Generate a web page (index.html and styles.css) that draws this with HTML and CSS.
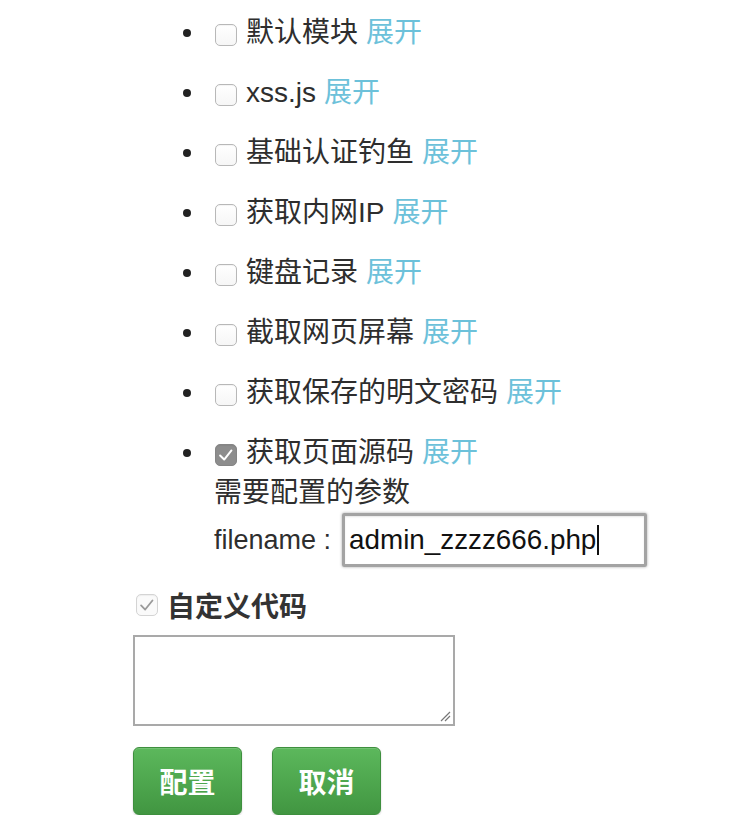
FILE: index.html
```html
<!DOCTYPE html>
<html lang="zh">
<head>
<meta charset="utf-8">
<link rel="stylesheet" href="styles.css">
</head>
<body>
<div class="page">
  <ul class="modules">
    <li class="mod"><span class="dot"></span><div class="body"><div class="line"><span class="cb"></span><span>默认模块</span><a class="expand">展开</a></div></div></li>
    <li class="mod"><span class="dot"></span><div class="body"><div class="line"><span class="cb"></span><span>xss.js</span><a class="expand">展开</a></div></div></li>
    <li class="mod"><span class="dot"></span><div class="body"><div class="line"><span class="cb"></span><span>基础认证钓鱼</span><a class="expand">展开</a></div></div></li>
    <li class="mod"><span class="dot"></span><div class="body"><div class="line"><span class="cb"></span><span>获取内网IP</span><a class="expand">展开</a></div></div></li>
    <li class="mod"><span class="dot"></span><div class="body"><div class="line"><span class="cb"></span><span>键盘记录</span><a class="expand">展开</a></div></div></li>
    <li class="mod"><span class="dot"></span><div class="body"><div class="line"><span class="cb"></span><span>截取网页屏幕</span><a class="expand">展开</a></div></div></li>
    <li class="mod"><span class="dot"></span><div class="body"><div class="line"><span class="cb"></span><span>获取保存的明文密码</span><a class="expand">展开</a></div></div></li>
    <li class="mod"><span class="dot"></span><div class="body">
      <div class="line"><span class="cb cb-on"><svg viewBox="0 0 22 22" width="20" height="20"><path d="M4.5 11.5 L9 16 L17 6" fill="none" stroke="#fff" stroke-width="2.2" stroke-linecap="round" stroke-linejoin="round"/></svg></span><span>获取页面源码</span><a class="expand">展开</a></div>
      <div class="line">需要配置的参数</div>
      <div class="param"><span class="param-label">filename :</span><div class="field">admin_zzzz666.php<span class="caret"></span></div></div>
    </div></li>
  </ul>
  <div class="custom"><span class="cb cb-light"><svg viewBox="0 0 22 22" width="20" height="20"><path d="M4.5 11.5 L9 16 L17 6" fill="none" stroke="#9a9a9a" stroke-width="2" stroke-linecap="round" stroke-linejoin="round"/></svg></span><span class="custom-title">自定义代码</span></div>
  <div class="code"><svg class="grip" viewBox="0 0 12 12" width="12" height="12"><path d="M2 11 L11 2 M6 11 L11 6" stroke="#777" stroke-width="1.2"/></svg></div>
  <div class="actions"><button class="btn">配置</button><button class="btn">取消</button></div>
</div>
</body>
</html>
```

FILE: styles.css
```css
* { box-sizing: border-box; }
html, body { margin: 0; background: #fff; }
body {
  font-family: "Liberation Sans", "Noto Sans CJK SC", sans-serif;
  font-size: 28px;
  color: #2e2e2e;
}
.page { padding: 13px 0 0 133px; }
.modules { list-style: none; margin: 0; padding: 0; }
.mod {
  display: grid;
  grid-template-columns: 81px 1fr;
  margin-bottom: 20px;
}
.mod:last-child { margin-bottom: 0; }
.dot {
  width: 8px; height: 8px; border-radius: 50%;
  background: #222;
  justify-self: end;
  margin: 16px 23px 0 0;
}
.line { height: 40px; line-height: 40px; display: flex; align-items: center; white-space: pre; }
.cb {
  width: 22px; height: 22px;
  border: 1px solid #b8b8b8;
  border-radius: 5px;
  background: linear-gradient(#ffffff, #f6f6f6);
  box-shadow: inset 0 1px 1px rgba(0,0,0,0.05);
  margin: 3px 9px 0 1px;
  display: inline-flex;
  flex: none;
}
.cb svg { display: block; }
.cb-on { background: #8d8d8d; border-color: #858585; }
.cb-light { border-color: #d4d4d4; background: #fafafa; margin: 0 9px 0 3px; }
.expand { color: #6cc1da; text-decoration: none; margin-left: 8px; }
.param { display: flex; align-items: center; height: 54px; font-size: 27px; }
.param-label { margin-right: 11px; }
.field {
  width: 305px; height: 54px;
  border: 3px solid #a3a3a3;
  border-radius: 2px;
  box-shadow: 0 0 3px rgba(0,0,0,0.35), inset 0 1px 2px rgba(0,0,0,0.1);
  padding-left: 4px;
  color: #111;
  font-size: 27.8px;
  display: flex; align-items: center;
}
.caret { width: 2px; height: 30px; background: #111; margin-left: 1px; }
.custom { display: flex; align-items: center; height: 40px; margin-top: 18px; }
.custom-title { font-weight: bold; color: #333; }
.code {
  width: 322px; height: 91px;
  margin-top: 10px;
  border: 2px solid #a9a9a9;
  position: relative;
  background: #fff;
}
.grip { position: absolute; right: 2px; bottom: 2px; }
.actions { display: flex; gap: 30px; margin-top: 21px; }
.btn {
  width: 109px; height: 68px;
  border: 1px solid #3e8f3e;
  border-radius: 6px;
  background: linear-gradient(#5cb85c, #419641);
  box-shadow: 0 1px 2px rgba(0,0,0,0.2), inset 0 1px 0 rgba(255,255,255,0.15);
  color: #fff;
  font-family: "Liberation Sans", "Noto Sans CJK SC", sans-serif;
  font-size: 28px;
  font-weight: bold;
  padding: 0;
}
```
